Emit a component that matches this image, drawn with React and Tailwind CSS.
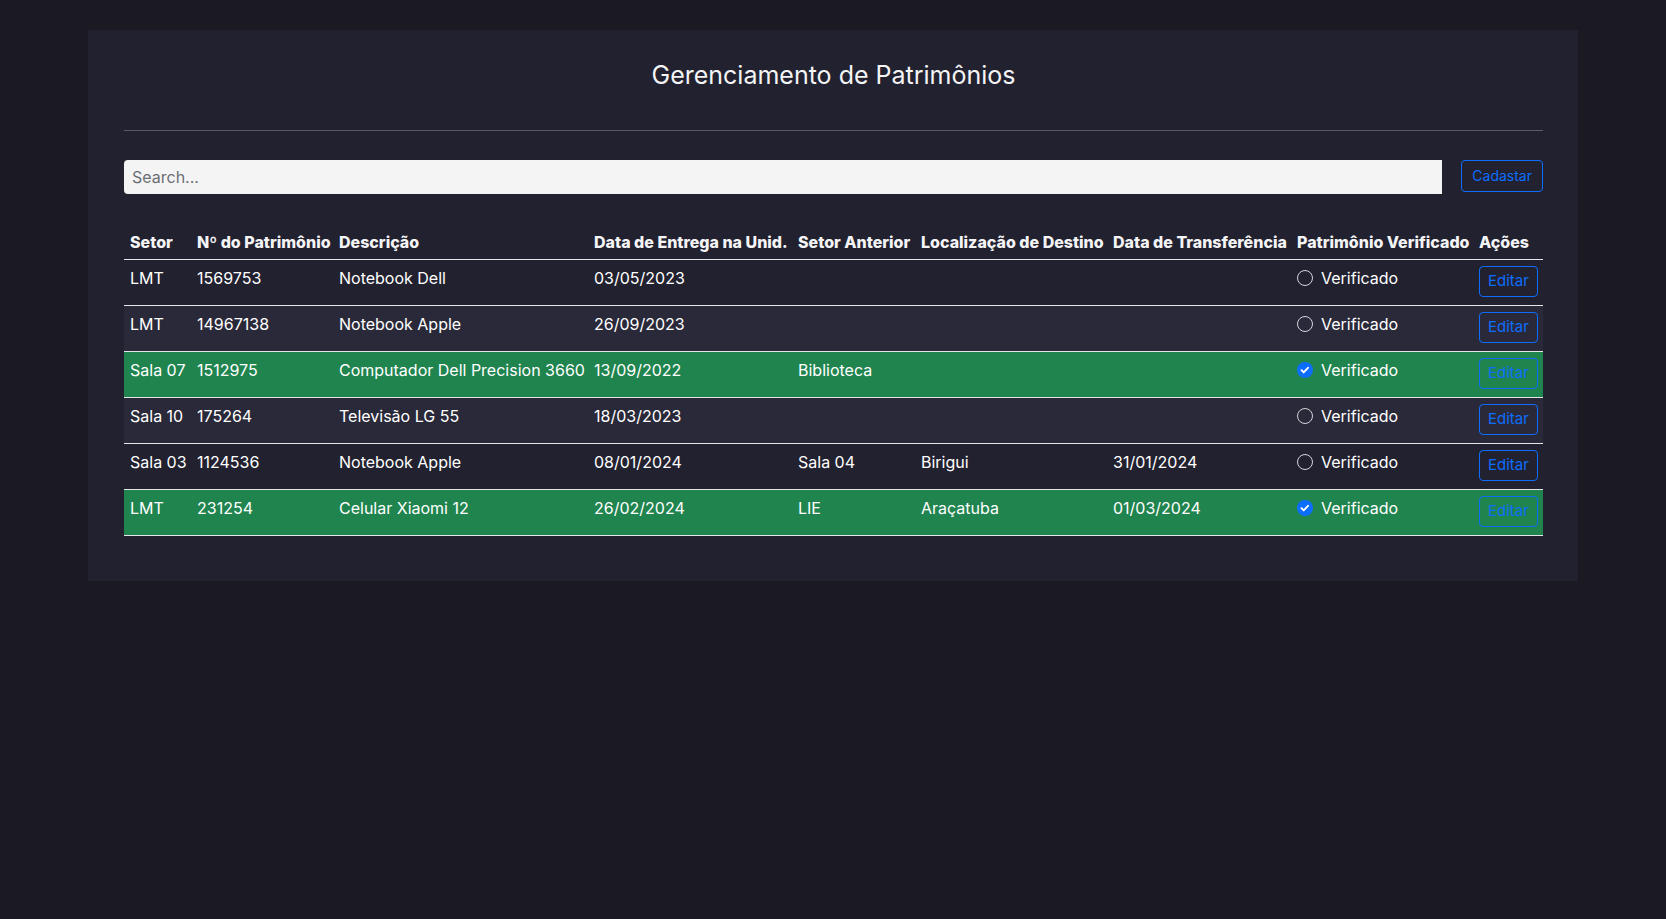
import React from 'react';

const rows = [
  { setor: 'LMT', num: '1569753', desc: 'Notebook Dell', entrega: '03/05/2023', anterior: '', destino: '', transf: '', ok: false },
  { setor: 'LMT', num: '14967138', desc: 'Notebook Apple', entrega: '26/09/2023', anterior: '', destino: '', transf: '', ok: false },
  { setor: 'Sala 07', num: '1512975', desc: 'Computador Dell Precision 3660', entrega: '13/09/2022', anterior: 'Biblioteca', destino: '', transf: '', ok: true },
  { setor: 'Sala 10', num: '175264', desc: 'Televisão LG 55', entrega: '18/03/2023', anterior: '', destino: '', transf: '', ok: false },
  { setor: 'Sala 03', num: '1124536', desc: 'Notebook Apple', entrega: '08/01/2024', anterior: 'Sala 04', destino: 'Birigui', transf: '31/01/2024', ok: false },
  { setor: 'LMT', num: '231254', desc: 'Celular Xiaomi 12', entrega: '26/02/2024', anterior: 'LIE', destino: 'Araçatuba', transf: '01/03/2024', ok: true },
];

const headers = [
  ['Setor', 'w-[67px]'],
  ['Nº do Patrimônio', 'w-[142px]'],
  ['Descrição', 'w-[255px]'],
  ['Data de Entrega na Unid.', 'w-[204px]'],
  ['Setor Anterior', 'w-[123px]'],
  ['Localização de Destino', 'w-[192px]'],
  ['Data de Transferência', 'w-[184px]'],
  ['Patrimônio Verificado', 'w-[182px]'],
  ['Ações', 'w-[70px]'],
];

function Check({ checked }) {
  if (checked) {
    return (
      <svg width="16" height="16" viewBox="0 0 16 16" className="shrink-0">
        <circle cx="8" cy="8" r="8" fill="#0d6efd" />
        <path d="M4.5 8.2l2.2 2.2 4.3-4.6" fill="none" stroke="#fff" strokeWidth="1.9" strokeLinecap="round" strokeLinejoin="round" />
      </svg>
    );
  }
  return <span className="w-4 h-4 shrink-0 rounded-full border border-[#d5d5dc] bg-transparent" />;
}

export default function App() {
  return (
    <div className="min-h-[919px] bg-[#1b1a23] pt-[30px] font-['Inter',sans-serif] text-white">
      <div className="mx-[88px] bg-[#22212f] pl-[36px] pr-[35px] pt-[29px] pb-[45px]">
        <h1 className="text-center text-[25px] leading-8 font-normal text-[#f4f4f6]">
          Gerenciamento de Patrimônios
        </h1>
        <hr className="mt-[39px] border-0 h-px bg-[#5b5a66]" />

        <div className="mt-[29px] flex items-start gap-[19px]">
          <input
            type="text"
            placeholder="Search..."
            className="flex-1 h-[34px] bg-[#f4f4f4] rounded-l-[4px] px-2 text-base text-[#212529] placeholder-[#6b6e73] outline-none"
          />
          <button className="h-8 px-2.5 rounded-[4px] border border-[#0d6efd] text-[#0d6efd] text-sm">
            Cadastar
          </button>
        </div>

        <table className="mt-[25px] w-full table-fixed border-collapse text-base">
          <thead>
            <tr className="border-b border-[#e6e6ea]">
              {headers.map(([h, w]) => (
                <th key={h} className={`${w} h-[40px] align-bottom px-1.5 pb-[5px] text-left font-extrabold whitespace-nowrap text-[#f4f4f6]`}>
                  {h}
                </th>
              ))}
            </tr>
          </thead>
          <tbody>
            {rows.map((r, i) => {
              const bg = r.ok ? 'bg-[#20844f]' : i % 2 === 1 ? 'bg-[#2a2939]' : 'bg-[#22212f]';
              return (
                <tr key={i} className={`${bg} border-b border-[#e6e6ea] align-top`}>
                  <td className="px-1.5 pt-[6px] whitespace-nowrap">{r.setor}</td>
                  <td className="px-1.5 pt-[6px] whitespace-nowrap">{r.num}</td>
                  <td className="px-1.5 pt-[6px] whitespace-nowrap">{r.desc}</td>
                  <td className="px-1.5 pt-[6px] whitespace-nowrap">{r.entrega}</td>
                  <td className="px-1.5 pt-[6px] whitespace-nowrap">{r.anterior}</td>
                  <td className="px-1.5 pt-[6px] whitespace-nowrap">{r.destino}</td>
                  <td className="px-1.5 pt-[6px] whitespace-nowrap">{r.transf}</td>
                  <td className="px-1.5 pt-[6px] whitespace-nowrap">
                    <div className="flex items-center gap-2 h-6">
                      <Check checked={r.ok} />
                      <span>Verificado</span>
                    </div>
                  </td>
                  <td className="px-1.5 pt-[6px] pb-[8px] whitespace-nowrap">
                    <button className="h-[31px] px-2 rounded-[4px] border border-[#0d6efd] text-[#0d6efd] text-[15px]">
                      Editar
                    </button>
                  </td>
                </tr>
              );
            })}
          </tbody>
        </table>
      </div>
    </div>
  );
}
